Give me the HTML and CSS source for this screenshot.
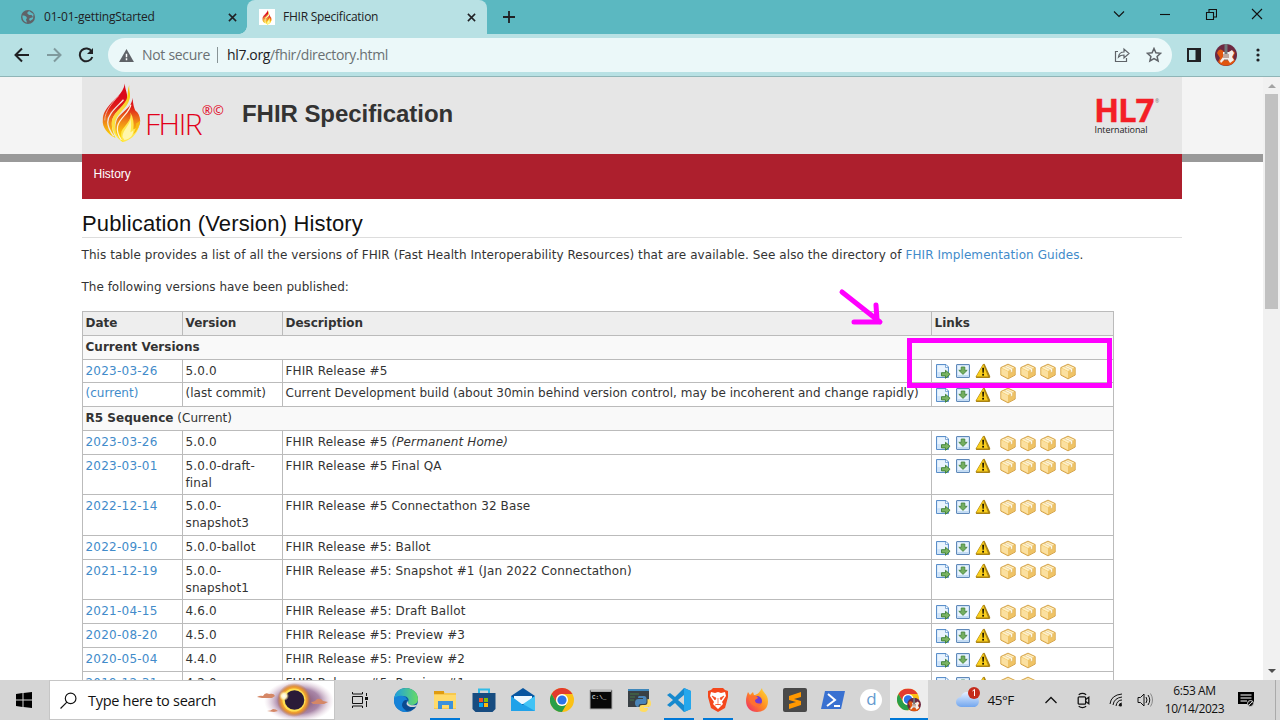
FILE: index.html
```html
<!DOCTYPE html>
<html lang="en">
<head>
<meta charset="utf-8">
<title>FHIR Specification</title>
<link rel="stylesheet" href="styles.css">
</head>
<body>
<svg class="defs" aria-hidden="true">
  <defs>
    <linearGradient id="flameFill" gradientUnits="userSpaceOnUse" x1="0" y1="14" x2="0" y2="57"><stop offset="0" stop-color="#db0a1a"/><stop offset=".25" stop-color="#df1d19"/><stop offset=".6" stop-color="#f08a17"/><stop offset="1" stop-color="#ffe600"/></linearGradient>
    <linearGradient id="flameGold" gradientUnits="userSpaceOnUse" x1="0" y1="8" x2="0" y2="58"><stop offset="0" stop-color="#f7c600"/><stop offset=".35" stop-color="#fbd53c"/><stop offset="1" stop-color="#ffed42"/></linearGradient>
    <linearGradient id="edgeA" x1="0" y1="0" x2="1" y2="0"><stop offset="0" stop-color="#1b9de2"/><stop offset="1" stop-color="#68db64"/></linearGradient>
    <linearGradient id="foxA" x1="1" y1="0" x2="0" y2="1"><stop offset="0" stop-color="#ffe23c"/><stop offset=".5" stop-color="#ff8a20"/><stop offset="1" stop-color="#ed2171"/></linearGradient>
    <linearGradient id="cloudA" x1="0" y1="0" x2="0" y2="1"><stop offset="0" stop-color="#e3efff"/><stop offset="1" stop-color="#72a6ee"/></linearGradient>
    <radialGradient id="haze"><stop offset="0" stop-color="#76415f"/><stop offset=".6" stop-color="#9a7299" stop-opacity=".85"/><stop offset="1" stop-color="#d9bdd0" stop-opacity="0"/></radialGradient>
    <radialGradient id="sunGlow"><stop offset=".55" stop-color="#ffc83c"/><stop offset=".78" stop-color="#e9952f"/><stop offset="1" stop-color="#b9683c" stop-opacity="0"/></radialGradient>
    <radialGradient id="spark"><stop offset="0" stop-color="#fff"/><stop offset=".5" stop-color="#fff3c0"/><stop offset="1" stop-color="#ffe089" stop-opacity="0"/></radialGradient>
  </defs>
  <symbol id="page" viewBox="0 0 16 16">
    <path d="M1.500 1.500H11l2.500 2.500v10.500h-12z" fill="#cfe4f9" stroke="#5b8fca"/>
    <path d="M2.500 2.500h8v2h2v4.500h-10z" fill="#eaf4fe"/><path d="M10.500 2v2.500H13" fill="#fff" stroke="#5b8fca" stroke-width=".7"/>
    <path d="M6.500 9.700h4V7.300l4.600 4-4.600 4v-2.400h-4z" fill="#7ab463" stroke="#3d7f30" stroke-width=".9"/>
  </symbol>
  <symbol id="down" viewBox="0 0 16 16">
    <rect x="1.500" y="1.500" width="13" height="13" rx=".5" fill="#c4dcf4" stroke="#6089b9"/>
    <rect x="2.700" y="2.700" width="10.600" height="9.300" fill="#e8f3fd"/><path d="M6.200 4h3.600v3.300h2.400L8 11.400 3.800 7.300h2.400z" fill="#74ae60" stroke="#438238" stroke-width=".8"/>
  </symbol>
  <symbol id="warn" viewBox="0 0 16 16">
    <path d="M9 .8q.8 0 1 1l5.200 11.500q.3 1.700-1 1.700H1.300L.6 13.700 7.900 1.200z" fill="#a98214"/><path d="M8.300 1.500 13 13.500H1.300z" fill="#fbcf1c"/>
    <path d="M7.200 4.800h1.900l-.3 5H7.500z" fill="#1d1600"/><rect x="7.200" y="10.800" width="1.800" height="1.800" fill="#1d1600"/>
  </symbol>
  <symbol id="box" viewBox="0 0 18 18">
    <path d="M9 1.200 16.600 4.800v8L9 16.800 1.400 12.800v-8z" fill="#f2c768" stroke="#cf993b" stroke-width=".9"/>
    <path d="M9 2 15.700 5 9 8.400 2.300 5z" fill="#fff0c4"/><path d="M2 5.600 9 9v7l-7-3.700z" fill="#fbe0a0"/><path d="M16 5.600 9 9v7l7-3.700z" fill="#efc365"/>
    <path d="m5 4 6.800 3.200v3l2-.9V6L7.200 3z" fill="#fffdf0" stroke="#dbae56" stroke-width=".5"/>
  </symbol>
  <symbol id="flame" viewBox="0 0 40 62">
    <path d="M23.500.5C23 6 27 11 25.500 17 23 24 14 28 11 36c-2 7 0 14 3 20C6 52 0 45 1 37 1 31 4 27 8 22 13 16 21 12 23.500.5Z" fill="url(#flameFill)"/>
    <path d="M22 17C16 24 6 31 6 40c0 5 3 10 6 14" fill="none" stroke="#f3e7e2" stroke-width="1.300"/>
    <path d="M17 13C11 20 3 28 3 38" fill="none" stroke="#eec5ba" stroke-width=".8"/>
    <path d="M28 2c-1 6 2 9 0 15-2 8-11 13-14 21-2 7 0 13 4 20-5-5-8-11-8-18 1-10 11-15 15-23 2-6 1-10 3-15Z" fill="url(#flameGold)"/>
    <path d="M31 15c1 6 1 8 3 13 3 2 5 6 5 11-1 9-8 17-18 21-7-6-9-13-6-22C19 29 31 26 31 15Z" fill="url(#flameFill)"/>
    <path d="M29.500 22C28 31 18 35 16 44c-1 6 1 10 4 14" fill="none" stroke="#fff1d6" stroke-width="1.300"/>
    <path d="M29 30c2 8-6 13-9 19-1 4 0 7 1 11 7-1 15-7 17-17-2 2-4 4-6 4 1-6 0-12-3-17Z" fill="#ffe64a"/>
    <path d="M29 36c0 7-8 11-8 19l2 3c6-1 9-5 9-10-1 1-2 2-3 2 1-4 1-9 0-14Z" fill="#fff6ab"/>
    <path d="M35 41q2-1 4-3-1 9-7 14 3-5 3-11Z" fill="#f8b812"/>
  </symbol>
  <symbol id="guitar" viewBox="0 0 22 22">
    <circle cx="11" cy="11" r="11" fill="#6d2941"/><path d="M2 9c2-5 5-4 7-1l4 1c2-3 6-3 7 0l-2 4 2 4c-3 5-12 7-17 1l2-4z" fill="#e1560e"/>
    <path d="M8 8h6l3-2 2 3-2 4 2 3-4 3-2-3H9l-3 3-1-2 3-4z" fill="#f3efeb"/><path d="M9.500 0h3v10h-3z" fill="#70777a"/><path d="M8 11h6m-6 2h6m-5 3h4" stroke="#8e6050"/>
  </symbol>
  <symbol id="chrome" viewBox="0 0 24 24">
    <circle cx="12" cy="12" r="12" fill="#fbc116"/><path d="M1.600 6A12 12 0 0 1 22.400 6H12a6 6 0 0 0-5.200 9z" fill="#e33b2e"/><path d="M1.600 6A12 12 0 0 0 12 24l5.200-9a6 6 0 0 1-10.400 0z" fill="#2a9e49"/>
    <circle cx="12" cy="12" r="6" fill="#fff"/><circle cx="12" cy="12" r="4.600" fill="#2e74e8"/>
  </symbol>
</svg>

<div class="tabs">
  <div class="tab idle">
    <svg class="fav" viewBox="0 0 16 16"><circle cx="8" cy="8" r="7" fill="#5f6368"/><path d="M2.500 6.500c2 0 4 .5 4.500 2.500l-1 1.500 1 3C4 13 2 10 2.500 6.500ZM9 2l-2 2 2 2h2.500L13 8c-1 1-3 .5-4 2l1 2 3-2 .5-5z" fill="#5bb8c1"/></svg>
    <span class="tab-name first">01-01-gettingStarted</span>
    <svg class="x" viewBox="0 0 10 10"><path d="m1 1 8 8m0-8-8 8" stroke="#202124" stroke-width="1.700"/></svg>
  </div>
  <div class="tab active">
    <span class="favbox"><svg viewBox="0 0 40 62"><use href="#flame"/></svg></span>
    <span class="tab-name second">FHIR Specification</span>
    <svg class="x" viewBox="0 0 10 10"><path d="m1 1 8 8m0-8-8 8" stroke="#202124" stroke-width="1.700"/></svg>
  </div>
  <svg class="plus" viewBox="0 0 12 12"><path d="M6 0v12M0 6h12" stroke="#202124" stroke-width="1.800"/></svg>
  <div class="window">
    <svg viewBox="0 0 12 12"><path d="m1 3.500 5 5 5-5" /></svg>
    <svg viewBox="0 0 12 12"><path d="M1 6.500h10"/></svg>
    <svg viewBox="0 0 12 12"><path d="M1.500 4.500h7v7h-7zM4 4V1.500h7.500V9H9"/></svg>
    <svg viewBox="0 0 12 12"><path d="m1 1 10 10M11 1 1 11"/></svg>
  </div>
</div>

<div class="toolbar">
  <div class="nav-icons">
    <svg viewBox="0 0 16 16"><path d="M15 8H2m6-6.500L1.500 8 8 14.500" stroke="#202124"/></svg>
    <svg viewBox="0 0 16 16"><path d="M1 8h13M8 1.500 14.500 8 8 14.500" stroke="#7f9a9d"/></svg>
    <svg viewBox="0 0 16 16"><path d="M13.700 4.500A6.400 6.400 0 1 0 14.300 10" stroke="#202124"/><path d="M15 1v6H9z" fill="#202124"/></svg>
  </div>
  <div class="address">
    <svg class="secure" viewBox="0 0 16 14"><path d="M8 0 16 14H0z" fill="#5f6368"/><path d="M7.200 5h1.600v4H7.200zm0 5h1.600v2H7.200z" fill="#fff"/></svg>
    <span class="ns">Not secure</span><span class="divider"></span>
    <span class="url"><b>hl7.org</b>/fhir/directory.html</span>
    <svg class="share" viewBox="0 0 16 16"><path d="M4 4.500H1.500v10h11V11M4.500 10C5 6.500 7 5 10 5V2l5 4.500-5 4.500V8C7.500 8 6 8.500 4.500 10Z"/></svg>
    <svg class="star" viewBox="0 0 16 16"><path d="m8 1.500 1.900 4.300 4.700.5-3.500 3.100 1 4.600L8 11.600 3.900 14l1-4.600-3.500-3.100 4.700-.5z"/></svg>
  </div>
  <svg class="panel" viewBox="0 0 14 14"><path d="M1 1h12v12H1z" fill="none" stroke="#202124" stroke-width="2"/><path d="M8.500 1H13v12H8.500z" fill="#202124"/></svg>
  <svg class="avatar"><use href="#guitar"/></svg>
  <svg class="dots" viewBox="0 0 4 14"><circle cx="2" cy="2" r="1.600"/><circle cx="2" cy="7" r="1.600"/><circle cx="2" cy="12" r="1.600"/></svg>
</div>

<div class="viewport">
<main>
  <header class="brandband"><div class="brand">
    <svg class="bigflame"><use href="#flame"/></svg><span class="fhir">FHIR</span><span class="reg">®©</span>
    <span class="site">FHIR Specification</span>
    <span class="hl7"><span class="hl7-name">HL7</span><span class="hl7-sub">International</span></span><span class="hl7-reg">®</span>
  </div></header>
  <nav class="redband"><div class="red">History</div></nav>
  <section class="content">
    <h1><span>Publication (Version) History</span></h1>
    <p class="intro">This table provides a list of all the versions of FHIR (Fast Health Interoperability Resources) that are available. See also the directory of <a>FHIR Implementation Guides</a>.</p>
    <p class="following">The following versions have been published:</p>
    <div class="versions">
      <div class="row head"><div>Date</div><div>Version</div><div>Description</div><div>Links</div></div>
      <div class="row group"><div><b>Current Versions</b></div></div>
      <div class="row short"><div><a>2023-03-26</a></div><div>5.0.0</div><div>FHIR Release #5</div><div class="links" data-boxes="4"></div></div>
      <div class="row dev"><div><a>(current)</a></div><div>(last commit)</div><div>Current Development build (about 30min behind version control, may be incoherent and change rapidly)</div><div class="links" data-boxes="1"></div></div>
      <div class="row group"><div><b>R5 Sequence</b> (Current)</div></div>
      <div class="row"><div><a>2023-03-26</a></div><div>5.0.0</div><div>FHIR Release #5 <em>(Permanent Home)</em></div><div class="links" data-boxes="4"></div></div>
      <div class="row tall"><div><a>2023-03-01</a></div><div>5.0.0-draft-<br>final</div><div>FHIR Release #5 Final QA</div><div class="links" data-boxes="4"></div></div>
      <div class="row taller"><div><a>2022-12-14</a></div><div>5.0.0-<br>snapshot3</div><div>FHIR Release #5 Connectathon 32 Base</div><div class="links" data-boxes="3"></div></div>
      <div class="row"><div><a>2022-09-10</a></div><div>5.0.0-ballot</div><div>FHIR Release #5: Ballot</div><div class="links" data-boxes="3"></div></div>
      <div class="row tall"><div><a>2021-12-19</a></div><div>5.0.0-<br>snapshot1</div><div>FHIR Release #5: Snapshot #1 (Jan 2022 Connectathon)</div><div class="links" data-boxes="3"></div></div>
      <div class="row"><div><a>2021-04-15</a></div><div>4.6.0</div><div>FHIR Release #5: Draft Ballot</div><div class="links" data-boxes="3"></div></div>
      <div class="row"><div><a>2020-08-20</a></div><div>4.5.0</div><div>FHIR Release #5: Preview #3</div><div class="links" data-boxes="3"></div></div>
      <div class="row"><div><a>2020-05-04</a></div><div>4.4.0</div><div>FHIR Release #5: Preview #2</div><div class="links" data-boxes="2"></div></div>
      <div class="row"><div><a>2019-12-31</a></div><div>4.2.0</div><div>FHIR Release #5: Preview #1</div><div class="links" data-boxes="2"></div></div>
    </div>
  </section>
</main>
<div class="scroll"><i class="up"></i><span class="thumb"></span><i class="dn"></i></div>
<svg class="marks" viewBox="0 0 280 110"><path d="m10 9 38 30M44 22l1 15M22 39h24" fill="none" stroke="#f0f" stroke-width="5" stroke-linecap="round"/><path d="M77.500 57.500h200v45h-200z" fill="none" stroke="#f0f" stroke-width="5"/></svg>
</div>

<footer class="taskbar">
  <div class="start"><svg viewBox="0 0 16 16"><path d="m0 2 6.500-1v6.500H0zM7.500.9 16 0v7.500H7.500zM0 8.500h6.500V15L0 14zM7.500 8.500H16V16l-8.500-1z"/></svg></div>
  <div class="search">
    <svg class="glass" viewBox="0 0 16 16"><circle cx="10" cy="6" r="5"/><path d="m6.500 9.500-6 6"/></svg>
    <span>Type here to search</span>
    <svg class="eclipse" viewBox="0 0 78 38"><ellipse cx="43" cy="20" rx="35" ry="21" fill="url(#haze)"/><circle cx="38" cy="19" r="17" fill="url(#sunGlow)"/><circle cx="38" cy="19" r="11.500" fill="#ffe052"/><circle cx="38.500" cy="19" r="9.800" fill="#2a1b38"/><path d="M1 16q3-2 6-1 2-4 6-2 5-1 6 2l-3 2H6zM55 21q4 0 6-3 4-1 6 2l5 1-4 2H57M11 30q4 0 6-2 3 0 5 2l-4 1z" fill="#d58766"/><circle cx="28" cy="15" r="5" fill="url(#spark)"/></svg>
  </div>
  <div class="task-view"><svg viewBox="0 0 16 16"><path d="M.5 0v2h10V0M.5 16v-2h10v2M.5 4.500h10v7H.5zM14.500 1v3m0 5v6"/><path d="M13 5h3v3h-3z" fill="#111" stroke="none"/></svg></div>
  <div class="apps">
    <div><svg viewBox="0 0 24 24"><circle cx="12" cy="12" r="12" fill="#0c59a4"/><path d="M0 11C1 3 7 0 12 0c7 0 12 5 12 11 0 4-3 6-7 6-3 0-4-1-3-3 2-3-1-6-5-6-3 0-7 1-9 3Z" fill="url(#edgeA)"/><path d="M0 11c3-5 13-4 13 1-5 0-6 9 1 12C5 25-1 18 0 11Z" fill="#1683d8"/><path d="M13 12c-3 4 2 9 9 6l-1 2C14 25 5 20 9 14c1-2 3-2 4-2Z" fill="#0b4a91"/><path d="M14 13c-1 3 2 5 8 4l2-1-2 2.500c-7 2-12-2-8-5.500Z" fill="#d6d6d6"/></svg></div>
    <div class="open"><svg viewBox="0 0 24 24"><path d="M1 3h9l2 2h11v16H1z" fill="#f7c84e"/><path d="M1 3h10v3H1z" fill="#df9b10"/><path d="M1 7h22v13H1z" fill="#ffda6a"/><path d="M5 13h15v8h-4v-4H9v4H5z" fill="#3c91dc"/></svg></div>
    <div><svg viewBox="0 0 24 24"><path d="M7 7V1.500h10V7" fill="none" stroke="#30bce8" stroke-width="2"/><path d="M.5 5h23v16l-3 3h-17l-3-3z" fill="#174c80"/><path d="M7 10h4v4H7z" fill="#f35325"/><path d="M12 10h4v4h-4z" fill="#81bc06"/><path d="M7 15h4v4H7z" fill="#05a6f0"/><path d="M12 15h4v4h-4z" fill="#ffba08"/></svg></div>
    <div><svg viewBox="0 0 24 24"><path d="M0 8 12 0l12 8v15H0z" fill="#0855a0"/><path d="M3 8h18v8H3z" fill="#eef8ff"/><path d="M0 8 12 17 24 8v15H0z" fill="#20a2e9"/><path d="M24 8v15L12 16z" fill="#42c3f5"/></svg></div>
    <div><svg><use href="#chrome"/></svg></div>
    <div><svg viewBox="0 0 24 24"><path d="M1 2h22v19H1z" fill="#080808" stroke="#aaa"/><path d="M2 3h20" stroke="#ddd" stroke-width="1.500"/><text x="3" y="11" class="cmd">C:\_</text></svg></div>
    <div><svg viewBox="0 0 24 24"><path d="M0 1h21v18H0z" fill="#394044"/><path d="M0 2h21" stroke="#4088bb" stroke-width="2"/><path d="M2 6h9M2 9h5M2 12h4" stroke="#477947"/><path d="M11 8h5q2.500 0 2.500 3v3q0 2-2 2h-4q-2 0-2 3-3.500 0-3.500-4t3.500-4H15v-1h-5q0-2 1-2Z" fill="#4a85b8"/><path d="M19.500 11q3.500 0 3.500 5 0 3-3 3h-4v1h4q0 4-4 4-4.500 0-4.500-3v-2q0-2 2.500-2h3q2.500 0 2.500-3z" fill="#ffdc60"/></svg></div>
    <div class="open"><svg viewBox="0 0 24 24"><path d="m17 0 7 3v18l-7 3L8 15l-5 4-3-2 6-5-6-5 3-2 5 4zM17 7l-6 5 6 5z" fill="#1689ce" fill-rule="evenodd"/><path d="m17 0 7 3v18l-7 3z" fill="#25a7ec"/></svg></div>
    <div class="open"><svg viewBox="0 0 24 24"><path d="M7 0h10l2 2 3 1v6l-3 11-7 4-7-4L2 9V3l3-1z" fill="#f4471c"/><path d="m5 4 4 1 3-1 3 1 4-1 1 4-4 6 1 2-5 5-5-5 1-2-4-6z" fill="#fff"/><path d="m6 8 4 2-1 2zM18 8l-4 2 1 2zM12 10v5m-3 2 3-1 3 1" fill="#f4471c" stroke="#f4471c" stroke-width=".7"/></svg></div>
    <div><svg viewBox="0 0 24 24"><path d="m3 4 2 3 3-3 1 3c3 0 5-2 8-7 0 4 6 6 6 13 0 8-5 11-11 11C3 24-2 16 3 4Z" fill="url(#foxA)"/><circle cx="12" cy="13" r="5" fill="#743bd2"/><path d="M4 9c5-3 8-1 9 1l-3 2c0 4 4 4 7 3-3 6-13 4-13-6Z" fill="#ff7030"/></svg></div>
    <div class="narrow"><svg viewBox="0 0 24 24"><rect width="24" height="24" rx="2" fill="#494949"/><path d="m6 8 12-4v5l-7 2 7 2v4L6 21v-5l7-2-7-2z" fill="#ff9800"/></svg></div>
    <div class="narrow"><svg viewBox="0 0 24 24"><path d="M4 3h20l-4 18H0z" fill="#3971d1"/><path d="m7 6 7 6-8 6m7 0h6" fill="none" stroke="#fff" stroke-width="2"/></svg></div>
    <div class="narrow"><span class="d">d</span></div>
    <div class="narrow selected"><svg viewBox="0 0 26 25"><use href="#chrome" x="0" y="0" width="24" height="24"/><svg x="11" y="10" width="15" height="15" viewBox="0 0 22 22"><use href="#guitar" width="22" height="22"/></svg></svg></div>
  </div>
  <div class="tray">
    <svg class="cloud" viewBox="0 0 26 24"><path d="M6 21a5 5 0 0 1 0-10c1-6 10-7 12 0 7-2 8 8 2 10z" fill="url(#cloudA)"/><circle cx="19" cy="7" r="6" fill="#c42b1c"/><path d="m17.500 5 2-1.500V10" fill="none" stroke="#fff"/></svg>
    <span class="temp">45°F</span>
    <svg class="chev" viewBox="0 0 12 8"><path d="m.5 7 5.500-5.500L11.500 7"/></svg>
    <svg class="meet" viewBox="0 0 12 16"><rect x="1" y="4.500" width="7" height="7" rx="1"/><path d="m8 7 3-2v6L8 9M1.500 2.500Q5 0 8.500 2.500M1.500 13.500Q5 16 8.500 13.500"/></svg>
    <svg class="wifi" viewBox="0 0 14 14"><path d="M1 11Q2 2 13 1M4 12Q5 5 13 4M7 13q1-6 6-6M10 13q0-3 3-3"/><circle cx="11.500" cy="12" r="1.500" fill="#111" stroke="none"/></svg>
    <svg class="sound" viewBox="0 0 17 16"><path d="M1 5.500h2.500L7 2v12l-3.500-3.500H1zM9 5q2 3 0 6m2-8q3.500 5 0 10"/><path d="M13.500 1.500q4 6.500 0 13" stroke="#888"/></svg>
    <div class="clock"><span class="time">6:53 AM</span><span class="date">10/14/2023</span></div>
    <svg class="note" viewBox="0 0 16 16"><path d="M0 0h16v12h-4v3l-3-3H0z" fill="#000"/><path d="M2.500 3h11M2.500 6h11M2.500 9H9" stroke="#fff"/><circle cx="12.500" cy="11.500" r="3" fill="#111" stroke="#d5d5d5"/><path d="m10.500 13.500 4-4" stroke="#d5d5d5"/></svg>
    <span class="edge"></span>
  </div>
</footer>
<script src="links.js"></script>
</body>
</html>
```
FILE: styles.css
```css
* { box-sizing: border-box; }
body { margin: 0; width: 1280px; height: 720px; overflow: hidden; display: flex; flex-direction: column; background: #fff; font-family: "DejaVu Sans", sans-serif; color: #333; }
svg { display: block; flex: none; }
.defs { position: absolute; width: 0; height: 0; }
span { white-space: nowrap; }

.tabs { height: 34px; flex: none; background: #5bb8c1; display: flex; align-items: center; font: 12px/16px "Open Sans", sans-serif; color: #202124; }
.tab { display: flex; align-items: center; height: 34px; }
.tab .x { width: 9px; height: 9px; margin-left: auto; }
.idle { width: 247px; padding: 0 10px 0 20px; background: radial-gradient(circle at 0 0, #5bb8c1 7.5px, #b8e1e4 8px) right bottom / 8px 8px no-repeat; }
.fav { width: 16px; height: 16px; margin-right: 8px; }
.tab-name { letter-spacing: -.2px; }
.second { letter-spacing: -.25px; }
.active { width: 240px; padding: 0 11px 0 12px; background: #b8e1e4; border-radius: 8px 8px 0 0; }
.favbox { width: 16px; height: 16px; background: #fff; margin-right: 8px; display: flex; justify-content: center; align-items: center; }
.favbox svg { width: 10px; height: 15px; }
.plus { width: 12px; height: 12px; margin-left: 16px; }
.window { display: flex; gap: 34px; margin-left: auto; padding-right: 17px; margin-top: -6px; }
.window svg { width: 12px; height: 12px; fill: none; stroke: #111; stroke-width: 1.1; }

.toolbar { height: 43px; flex: none; background: #b8e1e4; border-bottom: 1px solid #8fb5b7; display: flex; align-items: center; font: 14px/18px "Open Sans", sans-serif; }
.nav-icons { width: 108px; padding-left: 14px; display: flex; gap: 16px; }
.nav-icons svg { width: 16px; height: 16px; fill: none; stroke-width: 2; }
.address { width: 1064px; height: 34px; border-radius: 17px; background: #ebf8f9; display: flex; align-items: center; padding: 0 10px 0 11px; color: #6a7073; }
.secure { width: 15px; height: 13px; margin-right: 8px; }
.ns { width: 68px; letter-spacing: -.3px; }
.divider { width: 1px; height: 16px; background: #889496; margin: 0 9px 0 7px; }
.url { letter-spacing: -.36px; }
.url b { color: #202124; font-weight: 400; }
.share, .star { width: 16px; height: 16px; fill: none; stroke: #5f6368; stroke-width: 1.2; }
.share { margin-left: auto; margin-right: 16px; }
.star { stroke-width: 1.5; }
.panel { width: 14px; height: 14px; margin-left: 15px; }
.avatar { width: 22px; height: 22px; margin-left: 14px; }
.dots { width: 4px; height: 14px; margin-left: 19px; fill: #202124; }

.viewport { height: 603px; flex: none; display: flex; overflow: hidden; position: relative; }
main { width: 1263px; }
.brandband { height: 77px; background: #f4f4f4; padding-left: 82px; }
.brand { width: 1100px; height: 77px; background: #e6e6e6; display: flex; padding-left: 19px; }
.bigflame { width: 41px; height: 61px; margin-top: 6px; }
.fhir { font: 30px/36px "Open Sans", sans-serif; font-weight: 350; color: #e2001a; width: 60px; margin: 29px 0 0 3px; letter-spacing: -1.500px; }
.reg { font: 13px/16px "Open Sans", sans-serif; color: #e2001a; margin: 25px 0 0 -3px; width: 40px; letter-spacing: .2px; }
.site { font: bold 24px/28px "Liberation Sans", sans-serif; letter-spacing: -.05px; color: #333; margin-top: 23px; }
.hl7 { margin: 17px 0 0 auto; width: 60px; display: flex; flex-direction: column; }
.hl7-name { font: bold 33px/31px "Open Sans", sans-serif; color: #f41f26; letter-spacing: -1.2px; -webkit-text-stroke: .4px #f41f26; }
.hl7-sub { font: 9px/12px "Open Sans", sans-serif; color: #222; margin-top: -1px; letter-spacing: -.1px; margin-left: .5px; }
.hl7-reg { font: 5px/6px "Open Sans", sans-serif; color: #777; width: 27px; margin: 21px 0 0 1px; }
.redband { height: 45px; padding-left: 82px; background: linear-gradient(#999 0 8px, #fff 8px); }
.red { width: 1100px; height: 45px; background: #ad1f2d; color: #fff; font: 12px/16px "Liberation Sans", sans-serif; padding: 12px 11.500px; }
.content { padding-left: 82px; width: 1182px; }
h1 { margin: 0; height: 39px; border-bottom: 1px solid #ddd; font: 22px/26px "Liberation Sans", sans-serif; letter-spacing: .16px; color: #111; padding-top: 12px; }
p { margin: 0 0 0 -.5px; font-size: 12px; line-height: 17px; white-space: nowrap; }
.intro { margin-top: 9px; letter-spacing: .075px; }
.following { margin-top: 15px; }
a { color: #428bca; }
.versions { margin-top: 15px; width: 1032px; border-top: 1px solid #bbb; font-size: 12px; line-height: 17px; }
.row { height: 24px; display: grid; grid-template-columns: 100px 100px 649px 182px; border-left: 1px solid #bbb; border-bottom: 1px solid #bbb; }
.row > div { padding: 3px 0 0 2.500px; border-right: 1px solid #bbb; white-space: nowrap; letter-spacing: .13px; }
.row > div:first-child { letter-spacing: .23px; }
.row.head { background: #eee; font-weight: bold; }
.row.head > div, .row.group > div { letter-spacing: 0; }
.row.group { background: #f9f9f9; grid-template-columns: 1031px; }
.row.group > div { letter-spacing: .03px; }
.row.dev > div { padding-top: 2px; letter-spacing: .025px; }
.short { height: 23px; }
.tall { height: 40px; }
.taller { height: 41px; }
.row > .links, .row.dev > .links { display: flex; padding: 4px 0 0 3px; gap: 4px; }
.row.short > .links, .row.tall > .links { padding-top: 3px; }
.links svg { width: 16px; height: 16px; }
.links .box { width: 18px; height: 17px; margin: 0 -1px; }
.links .warn + .box { margin-left: 4px; }
.scroll { width: 17px; background: #f1f1f1; display: flex; flex-direction: column; align-items: center; }
.up, .dn { border: 4px solid transparent; width: 8px; height: 4px; }
.up { border-top: 0; border-bottom-color: #a3a3a3; margin: 7px 0 6px; }
.thumb { width: 13px; height: 215px; background: #c1c1c1; }
.dn { border-bottom: 0; border-top-color: #505050; margin: auto 0 7px; }
.marks { position: absolute; left: 832px; top: 206px; width: 280px; height: 110px; }

.taskbar { height: 40px; flex: none; background: #d5d5d5; display: flex; align-items: stretch; font-family: "Open Sans", sans-serif; color: #111; }
.taskbar > div, .apps > div { display: flex; align-items: center; justify-content: center; }
.start { width: 49px; }
.start svg { width: 16px; height: 16px; }
.taskbar > .search { width: 286px; background: #fff; border: 1px solid #c6c6c6; justify-content: flex-start; padding-left: 10px; font-size: 14.500px; letter-spacing: -.27px; }
.glass { width: 17px; height: 17px; margin-right: 11px; fill: none; stroke: #111; stroke-width: 1.1; }
.search span { width: 128px; }
.eclipse { width: 78px; height: 38px; margin-left: auto; }
.task-view { width: 50px; margin-right: 2px; }
.task-view svg { width: 16px; height: 16px; fill: none; stroke: #111; }
.taskbar > .apps { align-items: stretch; }
.apps > div { width: 39px; }
.apps > .narrow { width: 38px; }
.apps svg { width: 24px; height: 24px; }
.apps svg svg { width: 15px; height: 15px; }
.cmd { font: 6px "Liberation Mono", monospace; fill: #fff; }
.apps .open { background: linear-gradient(#0078d7, #0078d7) center bottom / 30px 2px no-repeat; }
.apps .selected { background: linear-gradient(#ededed 38px, #0078d7 38px); }
.d { width: 22px; height: 22px; border-radius: 50%; background: #fff; color: #659bcf; font: 17px/20px "Open Sans", sans-serif; text-align: center; }
.taskbar > .tray { margin-left: auto; width: 352px; justify-content: flex-start; padding-left: 27px; }
.cloud { width: 26px; height: 26px; margin-top: -5px; }
.temp { font-size: 13.500px; width: 29px; margin-left: 6px; letter-spacing: -.5px; }
.tray svg { fill: none; stroke: #111; }
.tray .cloud, .tray .note { stroke: none; }
.tray .chev { width: 12px; height: 8px; margin-left: 29px; stroke-width: 1.3; }
.meet { width: 13px; height: 17px; margin-left: 20px; stroke-width: 1.2; }
.wifi { width: 14px; height: 14px; margin-left: 19px; }
.sound { width: 17px; height: 16px; margin-left: 14px; }
.clock { width: 62px; margin-left: 9px; display: flex; flex-direction: column; align-items: center; font-size: 12px; line-height: 18px; letter-spacing: -.42px; }
.note { width: 16px; height: 16px; margin-left: 13px; }
.edge { width: 1px; height: 40px; background: #aaa; margin-left: auto; margin-right: 4px; }
```
FILE: links.js
```js
// Fills each Links cell with its page, download, warning and package icons.
document.querySelectorAll('.links').forEach(function (cell) {
  var names = ['page', 'down', 'warn'];
  for (var i = 0; i < Number(cell.dataset.boxes); i++) names.push('box');
  cell.innerHTML = names.map(function (n) {
    return '<svg class="' + n + '"><use href="#' + n + '"/></svg>';
  }).join('');
});
```
